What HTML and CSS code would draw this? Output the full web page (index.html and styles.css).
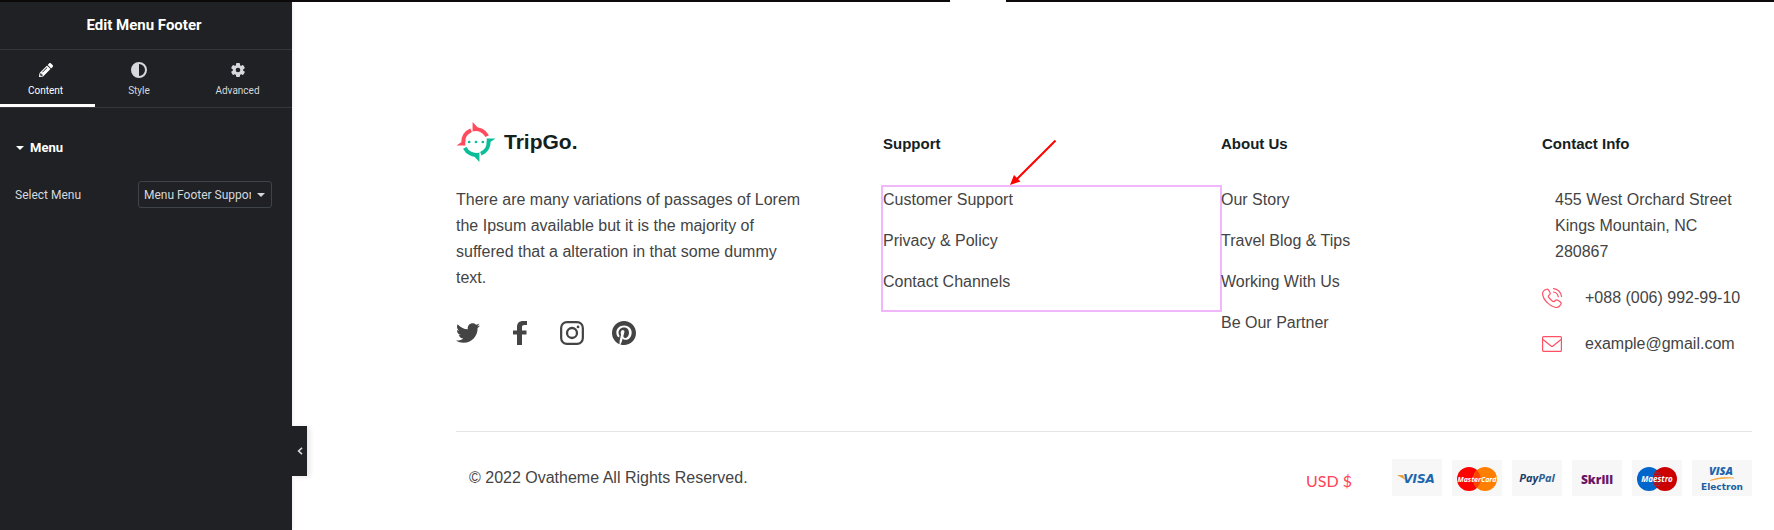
FILE: index.html
```html
<!DOCTYPE html>
<html lang="en">
<head>
  <meta charset="UTF-8">
  <meta name="viewport" content="width=device-width, initial-scale=1.0">
  <title>Edit Menu Footer</title>
  <link rel="stylesheet" href="styles.css">
</head>
<body>
  <div class="topbar"><span class="topbar-gap"></span></div>
  <div class="editor">
    <aside class="panel">
      <h1 class="panel-title">Edit Menu Footer</h1>
      <nav class="tabs">
        <button type="button" class="tab active">
          <svg width="14" height="14" viewBox="0 0 512 512" fill="currentColor"><path d="M498 142l-47 47c-4 4-12 4-16 0L323 77c-5-5-5-12 0-17l46-46c19-19 50-19 68 0l61 60c18 19 18 49 0 68zM284 100L22 362 0 484c-2 17 12 31 28 28l122-21 262-263c4-4 4-12 0-17L300 100c-4-5-12-5-16 0zM124 340c-5-6-5-14 0-20l154-154c6-5 14-5 20 0 5 6 5 14 0 20L144 340c-6 5-14 5-20 0zm-36 84h48v36l-65 11-31-31 12-64h36v48z"/></svg>
          Content
        </button>
        <button type="button" class="tab">
          <svg width="16" height="16" viewBox="0 0 16 16"><circle cx="8" cy="8" r="7" fill="none" stroke="currentColor" stroke-width="2"/><path d="M8 1a7 7 0 0 0 0 14z" fill="currentColor"/></svg>
          Style
        </button>
        <button type="button" class="tab">
          <svg width="16" height="16" viewBox="0 0 16 16"><g fill="currentColor"><rect x="6" y="1" width="4" height="14" rx="1"/><rect x="6" y="1" width="4" height="14" rx="1" transform="rotate(60 8 8)"/><rect x="6" y="1" width="4" height="14" rx="1" transform="rotate(120 8 8)"/></g><circle cx="8" cy="8" r="3.7" fill="none" stroke="currentColor" stroke-width="3"/><circle cx="8" cy="8" r="2.3" fill="#1f2124"/></svg>
          Advanced
        </button>
      </nav>
      <button type="button" class="section-toggle"><span class="caret"></span>Menu</button>
      <div class="control">
        <label for="menu-select">Select Menu</label>
        <div class="select-box">
          <select id="menu-select">
            <option>Menu Footer Support</option>
            <option>Menu Footer About</option>
          </select>
          <span class="caret"></span>
        </div>
      </div>
      <button type="button" class="collapse" aria-label="Hide panel">
        <svg width="6" height="8" viewBox="0 0 6 8" fill="none" stroke="currentColor" stroke-width="1.6"><path d="M5 .8L1.6 4 5 7.2"/></svg>
      </button>
    </aside>

    <footer class="preview">
      <div class="columns">
        <div class="brand">
          <a href="#" class="logo">
            <svg width="40" height="40" viewBox="0 0 40 41">
              <g fill="none" stroke-width="4">
                <path d="M7 20.500A13 13 0 0 1 15 8.500" stroke="#ff4b5c"/>
                <path d="M17.500 7.500A13 13 0 0 1 31.500 14.500" stroke="#ff4b5c"/>
                <path d="M33 20A13 13 0 0 1 25 32.500" stroke="#0bbd98"/>
                <path d="M22.500 33.500A13 13 0 0 1 8.500 26.500" stroke="#0bbd98"/>
              </g>
              <path d="M16.500 0v10l6-3.500zM0 24h9v-6z" fill="#ff4b5c"/>
              <path d="M23.500 41V31l-6 3.500zM40 17h-9v6z" fill="#0bbd98"/>
              <g fill="#0bbd98"><circle cx="13" cy="20.500" r="1.400"/><circle cx="20" cy="20.500" r="1.400"/><circle cx="27" cy="20.500" r="1.400"/></g>
            </svg>
            <span>TripGo.</span>
          </a>
          <p class="about">There are many variations of passages of Lorem the Ipsum available but it is the majority of suffered that a alteration in that some dummy text.</p>
          <div class="social">
            <a href="#" aria-label="Twitter"><svg width="24" height="24" viewBox="0 0 512 512" fill="currentColor"><path d="M459.370 151.716c.325 4.548.325 9.097.325 13.645 0 138.720-105.583 298.558-298.558 298.558-59.452 0-114.680-17.219-161.137-47.106 8.447.974 16.568 1.299 25.340 1.299 49.055 0 94.213-16.568 130.274-44.832-46.132-.975-84.792-31.188-98.112-72.772 6.498.974 12.995 1.624 19.818 1.624 9.421 0 18.843-1.300 27.614-3.573-48.081-9.747-84.143-51.980-84.143-102.985v-1.299c13.969 7.797 30.214 12.670 47.431 13.319-28.264-18.843-46.781-51.005-46.781-87.391 0-19.492 5.197-37.360 14.294-52.954 51.655 63.675 129.300 105.258 216.365 109.807-1.624-7.797-2.599-15.918-2.599-24.040 0-57.828 46.782-104.934 104.934-104.934 30.213 0 57.502 12.670 76.670 33.137 23.715-4.548 46.456-13.320 66.599-25.340-7.798 24.366-24.366 44.833-46.132 57.827 21.117-2.273 41.584-8.122 60.426-16.243-14.292 20.791-32.161 39.308-52.628 54.253z"/></svg></a>
            <a href="#" aria-label="Facebook"><svg width="14" height="24" viewBox="0 0 14 24" fill="currentColor"><path d="M4 24V13.500H0V9.500h4V6c0-4 2.300-6 6-6h4v4h-2.500C9.700 4 9 4.700 9 6.200v3.300h4.500v4H9V24z"/></svg></a>
            <a href="#" aria-label="Instagram"><svg width="24" height="24" viewBox="0 0 25 25" fill="none" stroke="currentColor"><rect x="1.200" y="1.200" width="22.600" height="22.600" rx="6" stroke-width="2.300"/><circle cx="12.500" cy="12.500" r="5.200" stroke-width="2.400"/><circle cx="18.800" cy="6.200" r="1.400" fill="currentColor" stroke="none"/></svg></a>
            <a href="#" aria-label="Pinterest"><svg width="24" height="24" viewBox="0 8 496 496" fill="currentColor"><path d="M496 256c0 137-111 248-248 248-25.600 0-50.200-3.900-73.400-11.100 10.100-16.500 25.200-43.500 30.800-65 3-11.600 15.400-59 15.400-59 8.100 15.400 31.700 28.500 56.800 28.500 74.800 0 128.700-68.800 128.700-154.300 0-81.900-66.900-143.200-152.900-143.200-107 0-163.900 71.800-163.900 150.100 0 36.400 19.400 81.700 50.300 96.100 4.700 2.200 7.200 1.200 8.300-3.300.8-3.400 5-20.300 6.900-28.100.6-2.500.3-4.700-1.700-7.100-10.100-12.500-18.300-35.300-18.300-56.600 0-54.700 41.400-107.600 112-107.600 60.900 0 103.600 41.500 103.600 100.900 0 67.100-33.900 113.600-78 113.600-24.300 0-42.600-20.100-36.700-44.800 7-29.500 20.500-61.300 20.500-82.600 0-19-10.200-34.900-31.400-34.900-24.900 0-44.900 25.700-44.900 60.200 0 22 7.400 36.800 7.400 36.800s-24.500 103.800-29 123.200c-5 21.400-3 51.600-.9 71.200C65.400 450.900 0 361.100 0 256 0 119 111 8 248 8s248 111 248 248z"/></svg></a>
          </div>
        </div>

        <div class="col">
          <h2>Support</h2>
          <ul class="links selected">
            <li><a href="#">Customer Support</a></li>
            <li><a href="#">Privacy &amp; Policy</a></li>
            <li><a href="#">Contact Channels</a></li>
          </ul>
          <svg class="arrow" width="46" height="46" viewBox="0 0 46 46"><path d="M45.500.500L6 40" stroke="#fe0000" stroke-width="2"/><path d="M0 45L4 35l6.500 6.500z" fill="#fe0000"/></svg>
        </div>

        <div class="col">
          <h2>About Us</h2>
          <ul class="links">
            <li><a href="#">Our Story</a></li>
            <li><a href="#">Travel Blog &amp; Tips</a></li>
            <li><a href="#">Working With Us</a></li>
            <li><a href="#">Be Our Partner</a></li>
          </ul>
        </div>

        <div class="col">
          <h2>Contact Info</h2>
          <address class="address">455 West Orchard Street<br>Kings Mountain, NC<br>280867</address>
          <div class="contact">
            <svg width="20" height="20" viewBox="0 0 20 20" fill="none" stroke="currentColor" stroke-linecap="round" stroke-width="1.200"><path d="M4.500 1.200C3 1.700.600 3.500.600 5.600c.3 6 7.600 13.600 13.800 13.900 2-.1 3.800-1.700 4.500-3.300.4-1 .2-1.600-.5-2.200l-2.500-1.800c-.9-.6-1.700-.5-2.400.1l-1.300 1.100c-.6.400-1.100.3-1.600-.1-1.500-1.100-3-2.600-4-4.100-.4-.6-.4-1 0-1.500l1.200-1.300c.6-.7.6-1.400.1-2.200L6.300 1.700c-.5-.6-1-.8-1.800-.5z"/><path d="M11.500.700c4.300.600 7.300 3.700 8 7.800M11.500 4c2.600.400 4.300 2.200 4.800 4.800"/></svg>
            <a href="#">+088 (006) 992-99-10</a>
          </div>
          <div class="contact">
            <svg width="20" height="16" viewBox="0 0 20 16" fill="none" stroke="currentColor" stroke-width="1.200"><rect x=".6" y=".6" width="18.800" height="14.800" rx="1"/><path d="M1 3.500l8 6.500q1 .8 2 0l8-6.500"/></svg>
            <a href="#">example@gmail.com</a>
          </div>
        </div>
      </div>

      <div class="bottom">
        <p class="copyright">© 2022 Ovatheme All Rights Reserved.</p>
        <span class="currency">USD $</span>
        <ul class="cards">
          <li class="card"><svg width="50" height="37" viewBox="0 0 50 37"><path d="M5 16h6l2.500 5z" fill="#e6a23c"/><text x="27" y="24" font-size="12" class="card-text visa wide-text">VISA</text></svg></li>
          <li class="card"><svg width="50" height="36" viewBox="0 0 50 36"><circle cx="17" cy="19" r="12" fill="#fd0100"/><circle cx="33" cy="19" r="12" fill="#ff8000"/><path d="M25 10.500a12 12 0 0 1 0 17 12 12 0 0 1 0-17z" fill="#fb4200"/><text x="25" y="22" font-size="7" class="card-text white">MasterCard</text></svg></li>
          <li class="card"><svg width="50" height="36" viewBox="0 0 50 36"><text x="25" y="22" font-size="11" class="card-text paypal">Pay<tspan fill="#2d6293">Pal</tspan></text></svg></li>
          <li class="card"><svg width="50" height="36" viewBox="0 0 50 36"><text x="25" y="24" font-size="12" class="card-text skrill">Skrill</text></svg></li>
          <li class="card"><svg width="50" height="36" viewBox="0 0 50 36"><circle cx="17" cy="19" r="12" fill="#0066cb"/><circle cx="33" cy="19" r="12" fill="#cc0000"/><path d="M22 13h6M21 15.500h8M21 23h8M22 25.500h6" stroke="#7b3560"/><text x="25" y="22" font-size="8" class="card-text white">Maestro</text></svg></li>
          <li class="card"><svg width="60" height="36" viewBox="0 0 60 36"><text x="29" y="15" font-size="11" class="card-text visa">VISA</text><path d="M18 20.500q10-4.500 24-2.500-13-.5-24 2.500z" fill="#f6a22b" stroke="#f6a22b" stroke-width=".5"/><text x="30" y="30" font-size="9" class="card-text electron wide-text">Electron</text></svg></li>
        </ul>
      </div>
    </footer>
  </div>
</body>
</html>
```
FILE: styles.css
```css
* {
  box-sizing: border-box;
}
body {
  margin: 0;
  min-height: 100vh;
  display: flex;
  flex-direction: column;
  font-family: "Liberation Sans", Arial, sans-serif;
  font-size: 16px;
  line-height: 26px;
  color: #444;
  background: #fff;
}
h1, h2, p, ul {
  margin: 0;
  padding: 0;
}
ul {
  list-style: none;
}
a {
  color: inherit;
  text-decoration: none;
}
button {
  border: 0;
  padding: 0;
  background: none;
  color: inherit;
  font: inherit;
  cursor: pointer;
}
svg {
  display: block;
  flex: none;
}
.topbar {
  height: 2px;
  padding-left: 950px;
  background: #0c0a0b;
}
.topbar-gap {
  display: block;
  width: 56px;
  height: 2px;
  background: #fff;
}
.editor {
  flex: 1;
  display: flex;
}

/* editor panel */
.panel {
  position: relative;
  flex: none;
  width: 292px;
  font-family: Roboto, sans-serif;
  font-size: 12px;
  line-height: 16px;
  color: #d5d8dc;
  background: #1f2124;
  box-shadow: 0 0 4px rgba(0, 0, 0, 0.1);
}
.panel-title {
  padding: 0 24px 0 20px;
  font-size: 15px;
  line-height: 47px;
  font-weight: 700;
  text-align: center;
  color: #fff;
  border-bottom: 1px solid #34373b;
}
.tabs {
  display: grid;
  grid-template-columns: 95fr 88fr 109fr;
  height: 58px;
  border-bottom: 1px solid #34373b;
}
.tab {
  display: flex;
  flex-direction: column;
  align-items: center;
  gap: 5px;
  padding-top: 12px;
  font-size: 10px;
  line-height: 16px;
}
.tab svg {
  height: 16px;
}
.tab.active {
  padding-right: 4px;
  color: #fff;
  box-shadow: inset 0 -3px #fff;
}
.caret {
  border: 4px solid transparent;
  border-top-color: currentColor;
  border-bottom: 0;
}
.section-toggle {
  display: flex;
  align-items: center;
  gap: 6px;
  margin: 32px 16px 25px;
  font-size: 13px;
  font-weight: 700;
  color: #fff;
}
.control {
  display: flex;
  align-items: center;
  justify-content: space-between;
  padding: 0 20px 0 15px;
}
.select-box {
  position: relative;
  width: 134px;
}
.select-box select {
  display: block;
  width: 100%;
  height: 27px;
  padding: 0 20px 0 5px;
  appearance: none;
  font: inherit;
  color: inherit;
  background: transparent;
  border: 1px solid #3f444b;
  border-radius: 3px;
}
.select-box .caret {
  position: absolute;
  right: 7px;
  top: 12px;
  pointer-events: none;
}
.collapse {
  position: absolute;
  left: 100%;
  bottom: 54px;
  display: flex;
  align-items: center;
  justify-content: center;
  width: 15px;
  height: 50px;
  background: #1f2124;
  box-shadow: 3px 1px 5px rgba(0, 0, 0, 0.1);
}

/* site footer */
.preview {
  flex: 1;
  min-width: 0;
  padding: 119px 22px 0 164px;
}
.columns {
  display: grid;
  grid-template-columns: 427fr 338fr 321fr 210fr;
  padding-bottom: 74px;
  border-bottom: 1px solid #e5e5e5;
}
.col {
  position: relative;
  padding-top: 10px;
}
.col h2 {
  margin-bottom: 30px;
  font-size: 15px;
  line-height: 26px;
  color: #14211f;
}
.logo {
  display: flex;
  align-items: center;
  gap: 8px;
  height: 42px;
  font-size: 21px;
  font-weight: 700;
  color: #14211f;
}
.about {
  max-width: 350px;
  margin: 24px 0 30px;
}
.social {
  display: flex;
  gap: 28px;
}
.social a {
  display: flex;
  justify-content: center;
  width: 24px;
}
.links li {
  padding-bottom: 15px;
}
.selected {
  margin-right: 1px;
  outline: 2px solid #f0b8fa;
}
.arrow {
  position: absolute;
  left: 127px;
  top: 19px;
}
.address {
  padding: 0 0 20px 13px;
  font-style: normal;
  white-space: nowrap;
}
.contact {
  display: flex;
  align-items: center;
  gap: 23px;
  margin-bottom: 20px;
  white-space: nowrap;
}
.contact:last-child {
  margin-bottom: 0;
}
.contact svg {
  color: #ff5064;
}
.bottom {
  display: flex;
  align-items: center;
  padding: 27px 0 0 13px;
}
.copyright {
  flex: 1;
}
.currency {
  align-self: flex-end;
  margin: 0 40px 2px 0;
  font-family: Lato, sans-serif;
  font-size: 16px;
  color: #ff4256;
}
.cards {
  display: flex;
  align-items: flex-end;
  gap: 10px;
}
.card {
  background: #f7f7f7;
}
.card-text {
  font-family: "Open Sans", sans-serif;
  font-weight: 700;
  text-anchor: middle;
}
.white {
  fill: #fff;
  font-style: italic;
}
.visa {
  fill: #1c66ae;
  font-style: italic;
  font-weight: 800;
}
.paypal {
  fill: #1c3f68;
  font-style: italic;
}
.skrill {
  fill: #6b1668;
  font-weight: 800;
}
.electron {
  fill: #1a5fa3;
}
.wide-text {
  font-family: "DejaVu Sans", sans-serif;
}
```
